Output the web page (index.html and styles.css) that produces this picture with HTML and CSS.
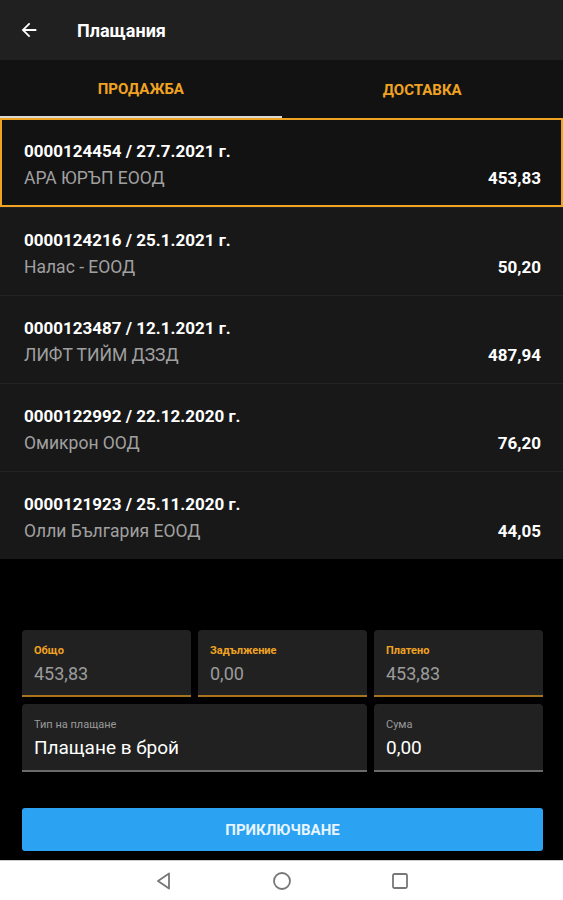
FILE: index.html
```html
<!DOCTYPE html>
<html>
<head>
    <meta charset="utf-8">
    <title>Плащания</title>
    <link rel="stylesheet" href="styles.css">
</head>
<body>
    <div id="app">
        <div class="appbar">
            <svg class="back" width="22" height="22" viewBox="0 0 24 24">
                <path d="M20 11H7.83l5.59-5.59L12 4l-8 8 8 8 1.41-1.41L7.83 13H20v-2z" fill="#fff"/>
            </svg>
            <div class="title">Плащания</div>
        </div>
        <div class="tabs">
            <div class="tab active">ПРОДАЖБА</div>
            <div class="tab">ДОСТАВКА</div>
        </div>
        <div class="list">
            <div class="item selected">
                <div class="num">0000124454 / 27.7.2021 г.</div>
                <div class="row">
                    <span class="name">АРА ЮРЪП ЕООД</span>
                    <span class="amount">453,83</span>
                </div>
            </div>
            <div class="item">
                <div class="num">0000124216 / 25.1.2021 г.</div>
                <div class="row">
                    <span class="name">Налас - ЕООД</span>
                    <span class="amount">50,20</span>
                </div>
            </div>
            <div class="item">
                <div class="num">0000123487 / 12.1.2021 г.</div>
                <div class="row">
                    <span class="name">ЛИФТ ТИЙМ ДЗЗД</span>
                    <span class="amount">487,94</span>
                </div>
            </div>
            <div class="item">
                <div class="num">0000122992 / 22.12.2020 г.</div>
                <div class="row">
                    <span class="name">Омикрон ООД</span>
                    <span class="amount">76,20</span>
                </div>
            </div>
            <div class="item">
                <div class="num">0000121923 / 25.11.2020 г.</div>
                <div class="row">
                    <span class="name">Олли България ЕООД</span>
                    <span class="amount">44,05</span>
                </div>
            </div>
        </div>
        <div class="summary">
            <div class="field accent">
                <div class="label">Общо</div>
                <div class="value">453,83</div>
            </div>
            <div class="field accent">
                <div class="label">Задължение</div>
                <div class="value">0,00</div>
            </div>
            <div class="field accent">
                <div class="label">Платено</div>
                <div class="value">453,83</div>
            </div>
            <div class="field wide">
                <div class="label">Тип на плащане</div>
                <div class="value">Плащане в брой</div>
            </div>
            <div class="field">
                <div class="label">Сума</div>
                <div class="value">0,00</div>
            </div>
        </div>
        <div class="actions">
            <button class="finish">ПРИКЛЮЧВАНЕ</button>
        </div>
        <div class="navbar">
            <svg width="20" height="20" viewBox="0 0 20 20">
                <path d="M15 2.5 L4 10 L15 17.5 Z" fill="none" stroke="#777" stroke-width="1.8" stroke-linejoin="round"/>
            </svg>
            <svg width="20" height="20" viewBox="0 0 20 20">
                <circle cx="10" cy="10" r="8" fill="none" stroke="#777" stroke-width="1.8"/>
            </svg>
            <svg width="20" height="20" viewBox="0 0 20 20">
                <rect x="3" y="3" width="14" height="14" rx="1.5" fill="none" stroke="#777" stroke-width="1.8"/>
            </svg>
        </div>
    </div>
</body>
</html>
```

FILE: styles.css
```css
body {
    margin: 0;
    background: #000;
    font-family: Roboto, "Noto Sans", sans-serif;
    color: #fff;
}
#app {
    width: 563px;
    height: 900px;
    display: flex;
    flex-direction: column;
    background: #000;
}
.appbar {
    height: 60px;
    background: #202020;
    display: flex;
    align-items: center;
    padding-left: 18px;
}
.back {
    margin-right: 37px;
}
.title {
    font-size: 18px;
    font-weight: bold;
}
.tabs {
    height: 58px;
    background: #121212;
    display: flex;
}
.tab {
    flex: 1;
    display: flex;
    align-items: center;
    justify-content: center;
    color: #f0a322;
    font-size: 15px;
    font-weight: bold;
    box-sizing: border-box;
    padding-top: 2px;
}
.tab.active {
    border-bottom: 2px solid #d8d8d8;
}
.list {
    display: flex;
    flex-direction: column;
}
.item {
    height: 88px;
    box-sizing: border-box;
    background: #181818;
    border-top: 1px solid #232323;
    padding: 21px 22px 0 24px;
}
.item.selected {
    height: 89px;
    background: #121212;
    border: 2px solid #f0a322;
    padding: 20px 20px 0 22px;
}
.num {
    font-size: 17px;
    font-weight: bold;
    line-height: 22px;
}
.row {
    display: flex;
    justify-content: space-between;
    align-items: baseline;
    margin-top: 4px;
    line-height: 24px;
}
.name {
    color: #a0a0a0;
    font-size: 17.5px;
}
.amount {
    font-size: 17px;
    font-weight: bold;
}
.summary {
    margin-top: 71px;
    padding: 0 20px 0 22px;
    display: grid;
    grid-template-columns: repeat(3, 1fr);
    gap: 7px;
}
.field {
    height: 68px;
    box-sizing: border-box;
    background: #212121;
    border-radius: 4px 4px 0 0;
    border-bottom: 2px solid #6a6a6a;
    padding: 14px 12px 0 12px;
}
.field.accent {
    height: 67px;
    border-bottom-color: #a8731c;
}
.field.wide {
    grid-column: span 2;
}
.label {
    font-size: 11px;
    line-height: 14px;
    color: #9a9a9a;
}
.accent .label {
    color: #f0a322;
    font-weight: bold;
}
.value {
    margin-top: 4px;
    font-size: 19px;
    line-height: 24px;
    color: #fff;
}
.accent .value {
    color: #9c9c9c;
    font-size: 18px;
}
.actions {
    padding: 36px 20px 0 22px;
}
.finish {
    width: 100%;
    height: 43px;
    border: none;
    border-radius: 3px;
    background: #2ba3f2;
    color: #e8f4ff;
    font-family: Roboto, sans-serif;
    font-size: 15px;
    font-weight: bold;
}
.navbar {
    margin-top: 9px;
    flex: 1;
    background: #fff;
    border-top: 1px solid #ccc;
    display: flex;
    align-items: center;
    justify-content: center;
    gap: 98px;
}
```
